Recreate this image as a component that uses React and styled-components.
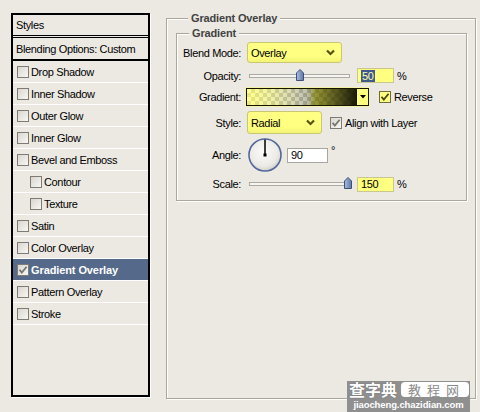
import React from 'react';
import styled, { createGlobalStyle } from 'styled-components';

const GlobalStyle = createGlobalStyle`
  html, body {
    margin: 0;
    padding: 0;
    background: #ece9e3;
  }
  body {
    font-family: "Liberation Sans", Arial, sans-serif;
    font-size: 11px;
    letter-spacing: -0.35px;
    color: #000;
  }
`;

const Dialog = styled.div`
  position: relative;
  display: flex;
  align-items: flex-start;
  gap: 16px;
  width: 480px;
  height: 412px;
  box-sizing: border-box;
  padding: 12px 0 0 11px;
  overflow: hidden;
`;

/* ---------- left list ---------- */

const StyleList = styled.div`
  width: 139px;
  height: 384px;
  box-sizing: border-box;
  margin-top: 1px;
  border: 2px solid #000;
  box-shadow: 1px 1px 0 #fff;
  display: flex;
  flex-direction: column;
  flex: none;
`;

const ListHeader = styled.div`
  height: 20px;
  display: flex;
  align-items: center;
  padding-left: 3px;
  border-bottom: 3px double #000;
`;

const BlendingRow = styled.div`
  height: 21px;
  display: flex;
  align-items: center;
  padding-left: 3px;
  border-bottom: 2px solid #000;
`;

const StyleItem = styled.div`
  height: 21px;
  display: flex;
  align-items: center;
  gap: 2px;
  padding-left: ${(p) => (p.$indent ? 17 : 4)}px;
  border-bottom: 1px solid #fff;
  background: ${(p) => (p.$selected ? '#556a8b' : 'transparent')};
  color: ${(p) => (p.$selected ? '#fff' : '#000')};
  font-weight: ${(p) => (p.$selected ? 'bold' : 'normal')};
  letter-spacing: ${(p) => (p.$selected ? '-0.1px' : '-0.35px')};
`;

const Box = styled.span`
  width: 12px;
  height: 12px;
  box-sizing: border-box;
  flex: none;
  display: flex;
  align-items: center;
  justify-content: center;
  border: 1px solid ${(p) => (p.$yellow ? '#6f6d3c' : '#7d7b74')};
  background: ${(p) =>
    p.$yellow ? '#ffff80' : 'linear-gradient(135deg, #d8d6ce, #f8f7f3)'};
`;

function CheckBox({ checked, yellow }) {
  return (
    <Box $yellow={yellow}>
      {checked && (
        <svg width="10" height="10" viewBox="0 0 10 10">
          <polyline
            points="1.5,4.8 3.8,7.6 8.6,1.8"
            fill="none"
            stroke={yellow ? '#4a4810' : '#76756f'}
            strokeWidth="1.8"
          />
        </svg>
      )}
    </Box>
  );
}

/* ---------- right group boxes ---------- */

const Group = styled.fieldset`
  margin: 0;
  min-width: 0;
  box-sizing: border-box;
  border: 1px solid #aca899;
  box-shadow: inset 1px 1px 0 #fff, 1px 1px 0 #fff;
  padding: ${(p) => p.$pad};
  width: ${(p) => (p.$width ? `${p.$width}px` : 'auto')};
  height: ${(p) => (p.$height ? `${p.$height}px` : 'auto')};
`;

const GroupTitle = styled.legend`
  margin-left: ${(p) => p.$offset}px;
  padding: 0 3px;
  line-height: 13px;
  font-weight: bold;
  letter-spacing: -0.15px;
  color: #424242;
  background: #ece9e3;
`;

const FormRow = styled.div`
  display: flex;
  align-items: center;
  height: ${(p) => p.$h}px;
`;

const Label = styled.div`
  width: 64px;
  flex: none;
  text-align: right;
  margin-right: 6px;
`;

const Controls = styled.div`
  display: flex;
  align-items: center;
  gap: ${(p) => p.$gap}px;
  margin-left: ${(p) => p.$shift || 0}px;
`;

const Select = styled.div`
  width: ${(p) => p.$width}px;
  height: ${(p) => p.$height}px;
  box-sizing: border-box;
  border: 1px solid #c9c772;
  border-radius: 3px;
  background: linear-gradient(#ffff84, #ffff80 70%, #f2f276);
  display: flex;
  align-items: center;
  justify-content: space-between;
  padding: 0 6px 0 3px;
`;

function Chevron() {
  return (
    <svg width="9" height="7" viewBox="0 0 9 7">
      <polyline points="1,1.5 4.5,5 8,1.5" fill="none" stroke="#55530f" strokeWidth="2.2" />
    </svg>
  );
}

const Track = styled.div`
  position: relative;
  width: ${(p) => p.$width}px;
  height: 4px;
  box-sizing: border-box;
  border: 1px solid #aaa9a2;
  background: #f6f5f1;
`;

const ThumbShape = styled.svg`
  position: absolute;
  top: -6px;
`;

function Slider({ width, value }) {
  const left = Math.round((width - 8) * value);
  return (
    <Track $width={width}>
      <ThumbShape width="8" height="12" viewBox="0 0 8 12" style={{ left: left - 1 }}>
        <defs>
          <linearGradient id="thumbFill" x1="0" x2="1" y1="0" y2="0">
            <stop offset="0" stopColor="#a9bddf" />
            <stop offset="1" stopColor="#5d77a3" />
          </linearGradient>
        </defs>
        <path d="M0.5 4 L4 0.5 L7.5 4 V11.5 H0.5 Z" fill="url(#thumbFill)" stroke="#3e5079" />
      </ThumbShape>
    </Track>
  );
}

const Field = styled.div`
  width: ${(p) => p.$width}px;
  height: 15px;
  box-sizing: border-box;
  border: 1px solid ${(p) => (p.$yellow ? '#cac88e' : '#a7a69f')};
  background: ${(p) => (p.$yellow ? '#ffff80' : '#fff')};
  padding-left: 3px;
  display: flex;
  align-items: center;
`;

const Selected = styled.span`
  background: #3e5a8b;
  color: #ffffa8;
  padding: 0 1px;
`;

const Unit = styled.span`
  margin-left: ${(p) => p.$gap || 0}px;
  margin-bottom: ${(p) => (p.$raised ? '11px' : '0')};
`;

const Swatch = styled.div`
  display: flex;
  height: 18px;
  box-shadow: 0 0 0 1px #f3f3a8;
`;

const GradientBar = styled.div`
  width: 111px;
  box-sizing: border-box;
  border: 1px solid #161600;
  background:
    linear-gradient(
      to right,
      rgba(255, 255, 100, 0.72) 0%,
      rgba(235, 235, 110, 0.62) 20%,
      rgba(190, 190, 120, 0.55) 40%,
      rgba(140, 140, 110, 0.55) 55%,
      rgba(120, 120, 0, 0.78) 63%,
      rgba(70, 70, 0, 0.86) 80%,
      rgba(20, 20, 0, 0.96) 100%
    ),
    repeating-conic-gradient(#b4b4b4 0 25%, #ffffff 0 50%) 0 0 / 8px 8px;
`;

const ArrowButton = styled.div`
  width: 12px;
  box-sizing: border-box;
  border: 1px solid #161600;
  border-left: none;
  background: #ffff80;
  display: flex;
  align-items: center;
  justify-content: center;
`;

const CheckLabel = styled.label`
  display: flex;
  align-items: center;
  gap: 3px;
`;

function AngleDial({ angle }) {
  const r = (angle * Math.PI) / 180;
  const x = 17 + Math.cos(r) * 15.5;
  const y = 17 - Math.sin(r) * 15.5;
  return (
    <svg width="34" height="34" viewBox="0 0 34 34">
      <defs>
        <radialGradient id="dialFill" cx="0.45" cy="0.4" r="0.6">
          <stop offset="0" stopColor="#fbfbfa" />
          <stop offset="0.75" stopColor="#ebeae6" />
          <stop offset="1" stopColor="#d2d1cc" />
        </radialGradient>
      </defs>
      <circle cx="17" cy="17" r="16" fill="url(#dialFill)" stroke="#52679a" strokeWidth="1.6" />
      <line x1="17" y1="17" x2={x} y2={y} stroke="#000" strokeWidth="1.5" />
      <rect x="15.5" y="15.5" width="3" height="3" fill="#000" />
    </svg>
  );
}

/* ---------- watermark ---------- */

const Watermark = styled.div`
  position: absolute;
  right: 10px;
  bottom: 0;
  width: 123px;
  display: flex;
  flex-direction: column;
  background: #8f8f8f;
  font-family: "Noto Sans CJK SC", "Liberation Sans", sans-serif;
  letter-spacing: 0;
`;

const MarkTop = styled.div`
  display: flex;
  align-items: center;
  justify-content: space-between;
  height: 17px;
  padding: 0 1px 0 2px;
`;

const MarkBrand = styled.span`
  color: #fff;
  font-weight: bold;
  font-size: 16px;
  line-height: 17px;
  text-shadow: 0 0 1px #555;
`;

const MarkTag = styled.span`
  background: #fff;
  color: #8a8a8a;
  border-radius: 4px;
  font-size: 13px;
  line-height: 15px;
  padding: 0 4px 0 7px;
  letter-spacing: 6px;
`;

const MarkUrl = styled.div`
  color: #fff;
  font-family: "Liberation Sans", Arial, sans-serif;
  font-weight: bold;
  font-size: 9.5px;
  line-height: 14px;
  letter-spacing: -0.1px;
  text-align: center;
  white-space: nowrap;
`;

const items = [
  { name: 'Drop Shadow' },
  { name: 'Inner Shadow' },
  { name: 'Outer Glow' },
  { name: 'Inner Glow' },
  { name: 'Bevel and Emboss' },
  { name: 'Contour', indent: true },
  { name: 'Texture', indent: true },
  { name: 'Satin' },
  { name: 'Color Overlay' },
  { name: 'Gradient Overlay', checked: true, selected: true },
  { name: 'Pattern Overlay' },
  { name: 'Stroke' },
];

export default function App() {
  return (
    <>
      <GlobalStyle />
      <Dialog>
        <StyleList>
          <ListHeader>Styles</ListHeader>
          <BlendingRow>Blending Options: Custom</BlendingRow>
          {items.map((it) => (
            <StyleItem key={it.name} $indent={it.indent} $selected={it.selected}>
              <CheckBox checked={it.checked} />
              {it.name}
            </StyleItem>
          ))}
        </StyleList>

        <Group $pad="2px 8px 0 9px" $width={310} $height={387}>
          <GroupTitle $offset={12}>Gradient Overlay</GroupTitle>
          <Group $pad="1px 0 4px 0">
            <GroupTitle $offset={12}>Gradient</GroupTitle>

            <FormRow $h={23}>
              <Label>Blend Mode:</Label>
              <Select $width={95} $height={21}>
                Overlay
                <Chevron />
              </Select>
            </FormRow>

            <FormRow $h={23}>
              <Label>Opacity:</Label>
              <Controls $gap={7} $shift={2}>
                <Slider width={101} value={0.5} />
                <Field $width={37} $yellow>
                  <Selected>50</Selected>
                </Field>
              </Controls>
              <Unit $gap={3}>%</Unit>
            </FormRow>

            <FormRow $h={20}>
              <Label>Gradient:</Label>
              <Controls $gap={10} $shift={-1}>
                <Swatch>
                  <GradientBar />
                  <ArrowButton>
                    <svg width="6" height="4" viewBox="0 0 6 4">
                      <path d="M0 0 H6 L3 3.5 Z" fill="#000" />
                    </svg>
                  </ArrowButton>
                </Swatch>
                <CheckLabel>
                  <CheckBox checked yellow />
                  Reverse
                </CheckLabel>
              </Controls>
            </FormRow>

            <FormRow $h={31}>
              <Label>Style:</Label>
              <Controls $gap={8}>
                <Select $width={75} $height={23}>
                  Radial
                  <Chevron />
                </Select>
                <CheckLabel>
                  <CheckBox checked />
                  Align with Layer
                </CheckLabel>
              </Controls>
            </FormRow>

            <FormRow $h={34}>
              <Label>Angle:</Label>
              <Controls $gap={5} $shift={1}>
                <AngleDial angle={90} />
                <Field $width={41}>90</Field>
              </Controls>
              <Unit $gap={3} $raised>°</Unit>
            </FormRow>

            <FormRow $h={24}>
              <Label>Scale:</Label>
              <Controls $gap={5} $shift={2}>
                <Slider width={103} value={1} />
                <Field $width={37} $yellow>
                  150
                </Field>
              </Controls>
              <Unit $gap={3}>%</Unit>
            </FormRow>
          </Group>
        </Group>

        <Watermark>
          <MarkTop>
            <MarkBrand>查字典</MarkBrand>
            <MarkTag>教程网</MarkTag>
          </MarkTop>
          <MarkUrl>jiaocheng.chazidian.com</MarkUrl>
        </Watermark>
      </Dialog>
    </>
  );
}
